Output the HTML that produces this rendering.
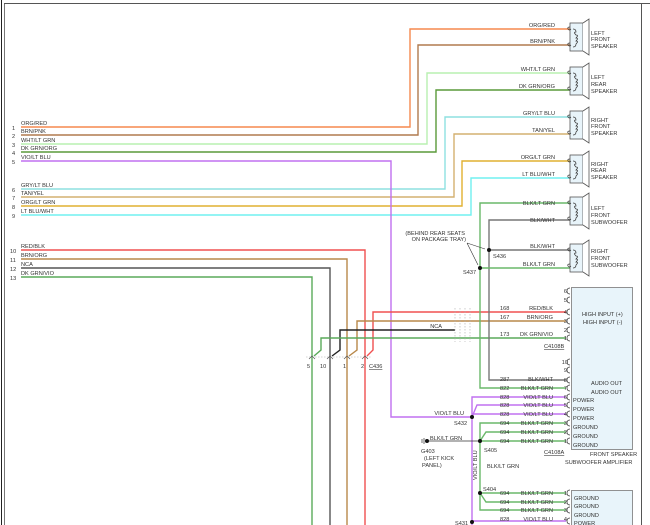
<!DOCTYPE html>
<html><head><meta charset="utf-8"><style>
html,body{margin:0;padding:0;background:#fff;width:650px;height:525px;overflow:hidden}
svg{display:block}
text{font-family:"Liberation Sans",sans-serif;font-size:5.6px;fill:#333}
</style></head><body>
<svg width="650" height="525" viewBox="0 0 650 525" xmlns="http://www.w3.org/2000/svg">
<defs>
<g id="spk">
<rect x="0" y="0" width="13" height="28" fill="#e8f4fa" stroke="#555" stroke-width="0.8"/>
<path d="M13 0 L19 -4 L19 32 L13 28" fill="#fff" stroke="#555" stroke-width="0.8"/>
<path d="M3 6 q3 0 3 3 q-3 0 0 3 q3 0 0 3 q3 0 0 3 q3 0 0 3 q0 3 -3 3" fill="none" stroke="#333" stroke-width="0.7"/>
<path d="M0 4 q-3 0 -2 2 q1 2 3 0 M0 20 q-3 0 -2 2 q1 2 3 0" fill="none" stroke="#333" stroke-width="0.7"/>
</g>
<path id="pin" d="M2 -3 q-3 0 -3 3 q0 3 3 3" fill="none" stroke="#333" stroke-width="0.7"/>
</defs>
<line x1="1.5" y1="0" x2="1.5" y2="525" stroke="#222" stroke-width="1"/>
<line x1="4.5" y1="3" x2="4.5" y2="525" stroke="#777" stroke-width="1"/>
<line x1="4" y1="3.5" x2="650" y2="3.5" stroke="#555" stroke-width="1"/>
<line x1="641.5" y1="3" x2="641.5" y2="525" stroke="#555" stroke-width="1"/>

<g fill="none" stroke-width="1.4">
<polyline points="21,127 410,127 410,29 570,29" stroke="#f5894e"/>
<polyline points="21,135 418,135 418,45 570,45" stroke="#b07a4e"/>
<polyline points="21,144 427,144 427,73 570,73" stroke="#b8f0b0"/>
<polyline points="21,152 436,152 436,90 570,90" stroke="#5a9a3a"/>
<polyline points="21,189 445,189 445,117 570,117" stroke="#8ee0e0"/>
<polyline points="21,197 454,197 454,134 570,134" stroke="#d4b070"/>
<polyline points="21,206 462,206 462,161 570,161" stroke="#e0b030"/>
<polyline points="21,215 471,215 471,178 570,178" stroke="#70f0f0"/>
<polyline points="21,161 391,161 391,417 472,417" stroke="#c070f0"/>
<polyline points="21,250 365,250 365,525" stroke="#f05050"/>
<polyline points="21,259 347,259 347,525" stroke="#b8884a"/>
<polyline points="21,268 330,268 330,525" stroke="#555"/>
<polyline points="21,277 312,277 312,525" stroke="#5aaa5a"/>
<polyline points="566,312 373,312 373,350 367,356" stroke="#f05050"/>
<polyline points="566,321 357,321 357,350 349,356" stroke="#b8884a"/>
<polyline points="455,330 340,330 340,350 332,356" stroke="#222"/>
<polyline points="566,338 321,338 321,350 314,356" stroke="#5aaa5a"/>
<polyline points="570,203 480,203 480,388 566,388" stroke="#6ab86a"/>
<polyline points="570,220 489,220 489,380 566,380" stroke="#777"/>
<line x1="489" y1="250" x2="570" y2="250" stroke="#777"/>
<line x1="480" y1="268" x2="570" y2="268" stroke="#6ab86a"/>
<polyline points="566,397 472,397 472,525" stroke="#c070f0"/>
<polyline points="472,417 477,405 566,405" stroke="#c070f0"/>
<line x1="472" y1="414" x2="566" y2="414" stroke="#c070f0"/>
<polyline points="566,423 480,423 480,510 566,510" stroke="#6ab86a"/>
<polyline points="480,441 486,432 566,432" stroke="#6ab86a"/>
<line x1="480" y1="441" x2="566" y2="441" stroke="#6ab86a"/>
<line x1="480" y1="493" x2="566" y2="493" stroke="#6ab86a"/>
<polyline points="480,493 486,502 566,502" stroke="#6ab86a"/>
<line x1="472" y1="521" x2="566" y2="521" stroke="#c070f0"/>
</g>
<line x1="428" y1="441" x2="480" y2="441" stroke="#333" stroke-width="0.8"/>
<g stroke="#aaa" stroke-width="0.6" stroke-dasharray="1.5 1.5">
<line x1="455" y1="308" x2="455" y2="342"/><line x1="460" y1="308" x2="460" y2="342"/><line x1="465" y1="308" x2="465" y2="342"/><line x1="470" y1="308" x2="470" y2="342"/>
<line x1="306" y1="357" x2="372" y2="357"/>
</g>
<g fill="none" stroke="#555" stroke-width="0.7">
<path d="M309 359 l3 -3 l3 3 M327 359 l3 -3 l3 3 M344 359 l3 -3 l3 3 M362 359 l3 -3 l3 3"/>
</g>
<g fill="#111">
<circle cx="489" cy="250" r="2"/><circle cx="480" cy="268" r="2"/>
<circle cx="472" cy="417" r="2"/><circle cx="480" cy="441" r="2"/>
<circle cx="480" cy="493" r="2"/><circle cx="472" cy="522" r="2"/>
<circle cx="427" cy="441" r="2"/>
</g>
<path d="M424 438 v6 M422 439 v4" stroke="#333" stroke-width="0.7"/>
<path d="M467 243 L485 249 M467 243 L478 265" stroke="#333" stroke-width="0.6" fill="none"/>
<use href="#spk" x="570" y="23"/>
<use href="#spk" x="570" y="67"/>
<use href="#spk" x="570" y="111"/>
<use href="#spk" x="570" y="155"/>
<use href="#spk" x="570" y="197"/>
<use href="#spk" x="570" y="244"/>
<rect x="571.5" y="287.5" width="61" height="162" fill="#e8f4fa" stroke="#777" stroke-width="0.8"/>
<rect x="571.5" y="490.5" width="61" height="40" fill="#e8f4fa" stroke="#777" stroke-width="0.8"/>
<g>
<use href="#pin" x="568" y="291"/><use href="#pin" x="568" y="300"/><use href="#pin" x="568" y="312"/><use href="#pin" x="568" y="321"/><use href="#pin" x="568" y="330"/><use href="#pin" x="568" y="338"/>
<use href="#pin" x="568" y="362"/><use href="#pin" x="568" y="370"/><use href="#pin" x="568" y="380"/><use href="#pin" x="568" y="388"/><use href="#pin" x="568" y="397"/><use href="#pin" x="568" y="405"/><use href="#pin" x="568" y="414"/><use href="#pin" x="568" y="423"/><use href="#pin" x="568" y="432"/><use href="#pin" x="568" y="441"/>
<use href="#pin" x="568" y="493"/><use href="#pin" x="568" y="502"/><use href="#pin" x="568" y="510"/><use href="#pin" x="568" y="521"/>
</g>
<g>
<text x="21" y="125">ORG/RED</text><text x="21" y="133">BRN/PNK</text><text x="21" y="142">WHT/LT GRN</text><text x="21" y="150">DK GRN/ORG</text><text x="21" y="159">VIO/LT BLU</text>
<text x="21" y="187">GRY/LT BLU</text><text x="21" y="195">TAN/YEL</text><text x="21" y="204">ORG/LT GRN</text><text x="21" y="213">LT BLU/WHT</text>
<text x="21" y="248">RED/BLK</text><text x="21" y="257">BRN/ORG</text><text x="21" y="266">NCA</text><text x="21" y="275">DK GRN/VIO</text>
<text x="12" y="130">1</text><text x="12" y="138">2</text><text x="12" y="147">3</text><text x="12" y="155">4</text><text x="12" y="164">5</text>
<text x="12" y="192">6</text><text x="12" y="200">7</text><text x="12" y="209">8</text><text x="12" y="218">9</text>
<text x="10" y="253">10</text><text x="10" y="262">11</text><text x="10" y="271">12</text><text x="10" y="280">13</text>
</g>
<g text-anchor="end">
<text x="555" y="27">ORG/RED</text><text x="555" y="43">BRN/PNK</text><text x="555" y="71">WHT/LT GRN</text><text x="555" y="88">DK GRN/ORG</text>
<text x="555" y="115">GRY/LT BLU</text><text x="555" y="132">TAN/YEL</text><text x="555" y="159">ORG/LT GRN</text><text x="555" y="176">LT BLU/WHT</text>
<text x="555" y="205">BLK/LT GRN</text><text x="555" y="222">BLK/WHT</text><text x="555" y="248">BLK/WHT</text><text x="555" y="266">BLK/LT GRN</text>
<text x="553" y="310">RED/BLK</text><text x="553" y="319">BRN/ORG</text><text x="553" y="336">DK GRN/VIO</text><text x="442" y="328">NCA</text>
<text x="553" y="381">BLK/WHT</text><text x="553" y="390">BLK/LT GRN</text>
<text x="553" y="399">VIO/LT BLU</text><text x="553" y="407">VIO/LT BLU</text><text x="553" y="416">VIO/LT BLU</text>
<text x="553" y="425">BLK/LT GRN</text><text x="553" y="434">BLK/LT GRN</text><text x="553" y="443">BLK/LT GRN</text>
<text x="553" y="495">BLK/LT GRN</text><text x="553" y="504">BLK/LT GRN</text><text x="553" y="512">BLK/LT GRN</text><text x="553" y="521">VIO/LT BLU</text>
<text x="464" y="415">VIO/LT BLU</text>
<text x="567" y="293">6</text><text x="567" y="302">5</text><text x="567" y="314">4</text><text x="567" y="323">3</text><text x="567" y="332">2</text><text x="567" y="340">1</text>
<text x="568" y="364">10</text><text x="567" y="372">9</text><text x="567" y="382">8</text><text x="567" y="390">7</text><text x="567" y="399">6</text><text x="567" y="407">5</text><text x="567" y="416">4</text><text x="567" y="425">3</text><text x="567" y="434">2</text><text x="567" y="443">1</text>
<text x="567" y="495">1</text><text x="567" y="504">2</text><text x="567" y="512">3</text><text x="567" y="521">4</text>
<text x="465" y="235">(BEHIND REAR SEATS</text><text x="466" y="241">ON PACKAGE TRAY)</text>
</g>
<g>
<text x="500" y="310">168</text><text x="500" y="319">167</text><text x="500" y="336">173</text>
<text x="500" y="381">287</text><text x="500" y="390">822</text>
<text x="500" y="399">828</text><text x="500" y="407">828</text><text x="500" y="416">828</text>
<text x="500" y="425">694</text><text x="500" y="434">694</text><text x="500" y="443">694</text>
<text x="500" y="495">694</text><text x="500" y="504">694</text><text x="500" y="512">694</text><text x="500" y="521">828</text>
<text x="493" y="258">S436</text><text x="463" y="274">S437</text>
<text x="454" y="425">S432</text><text x="484" y="452">S405</text><text x="483" y="491">S404</text><text x="455" y="525">S431</text>
<text x="421" y="453">G403</text><text x="424" y="460">(LEFT KICK</text><text x="422" y="467">PANEL)</text>
<text x="430" y="440">BLK/LT GRN</text><text x="487" y="468">BLK/LT GRN</text>
<text x="477" y="480" transform="rotate(-90 477 480)">VIO/LT BLU</text>
<text x="544" y="348" text-decoration="underline">C4108B</text><text x="544" y="454" text-decoration="underline">C4108A</text>
<text x="369" y="368" text-decoration="underline">C436</text>
<text x="307" y="368">5</text><text x="320" y="368">10</text><text x="343" y="368">1</text><text x="361" y="368">2</text>
<text x="582" y="316">HIGH INPUT (+)</text><text x="583" y="324">HIGH INPUT (-)</text>
<text x="591" y="385">AUDIO OUT</text><text x="591" y="394">AUDIO OUT</text>
<text x="573" y="402">POWER</text><text x="573" y="411">POWER</text><text x="573" y="420">POWER</text>
<text x="573" y="429">GROUND</text><text x="573" y="438">GROUND</text><text x="573" y="447">GROUND</text>
<text x="590" y="456">FRONT SPEAKER</text><text x="565" y="464">SUBWOOFER AMPLIFIER</text>
<text x="574" y="500">GROUND</text><text x="574" y="508">GROUND</text><text x="574" y="517">GROUND</text><text x="574" y="525">POWER</text>
<text x="591" y="35">LEFT</text><text x="591" y="41">FRONT</text><text x="591" y="48">SPEAKER</text>
<text x="591" y="79">LEFT</text><text x="591" y="86">REAR</text><text x="591" y="93">SPEAKER</text>
<text x="591" y="122">RIGHT</text><text x="591" y="128">FRONT</text><text x="591" y="135">SPEAKER</text>
<text x="591" y="166">RIGHT</text><text x="591" y="172">REAR</text><text x="591" y="179">SPEAKER</text>
<text x="591" y="210">LEFT</text><text x="591" y="217">FRONT</text><text x="591" y="224">SUBWOOFER</text>
<text x="591" y="253">RIGHT</text><text x="591" y="260">FRONT</text><text x="591" y="267">SUBWOOFER</text>
</g>
</svg>
</body></html>
